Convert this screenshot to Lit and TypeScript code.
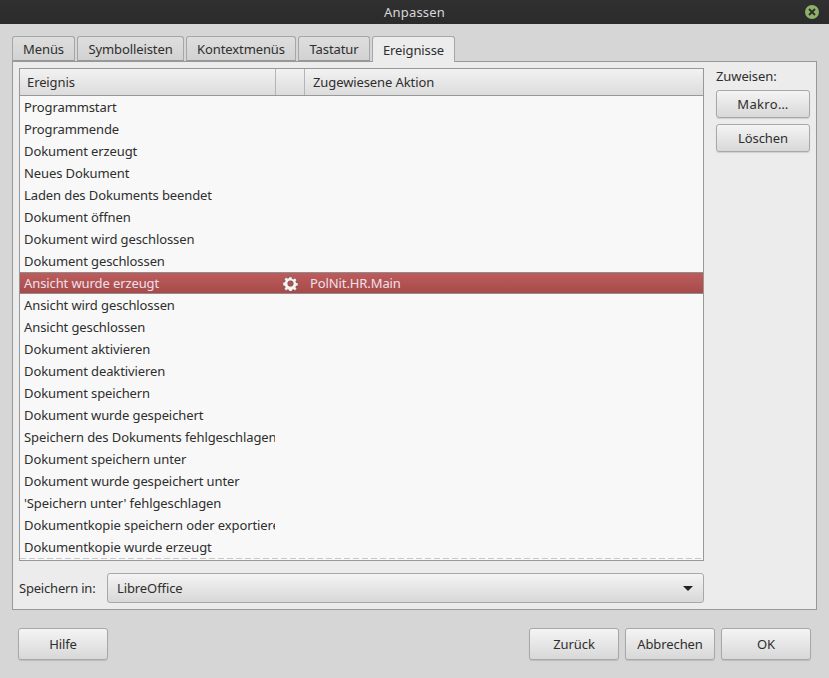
import { LitElement, html, css } from "lit";
import { customElement } from "lit/decorators.js";

const ROWS = [
  "Programmstart","Programmende","Dokument erzeugt","Neues Dokument","Laden des Dokuments beendet",
  "Dokument öffnen","Dokument wird geschlossen","Dokument geschlossen","Ansicht wurde erzeugt",
  "Ansicht wird geschlossen","Ansicht geschlossen","Dokument aktivieren","Dokument deaktivieren",
  "Dokument speichern","Dokument wurde gespeichert","Speichern des Dokuments fehlgeschlagen",
  "Dokument speichern unter","Dokument wurde gespeichert unter","'Speichern unter' fehlgeschlagen",
  "Dokumentkopie speichern oder exportieren","Dokumentkopie wurde erzeugt",
];
const TABS = [["Menüs",63],["Symbolleisten",107],["Kontextmenüs",110],["Tastatur",72],["Ereignisse",83]] as const;

@customElement("app-root")
export class AppRoot extends LitElement {
  static styles = css`
    :host { display: block; width: 829px; height: 678px; background: #d6d6d6; overflow: hidden;
      font: 13px "Noto Sans", "Open Sans", sans-serif; color: #2e2e2e; letter-spacing: -0.1px; }
    .title { height: 24px; background: linear-gradient(#303030, #2b2b2b); color: #d8d8d8; display: flex;
      align-items: center; justify-content: center; position: relative; letter-spacing: 0.2px; }
    .close { position: absolute; left: 805px; top: 5px; width: 14px; height: 14px; border-radius: 50%; background: #8cb369;
      display: flex; align-items: center; justify-content: center; }
    .content { padding: 12px 12px 0 12px; }
    .tabs { display: flex; gap: 2px; height: 25px; position: relative; z-index: 1; }
    .tab { box-sizing: border-box; height: 25px; border: 1px solid #a6a6a6; border-bottom: 1px solid #989898; border-radius: 3px 3px 0 0;
      background: linear-gradient(#dedede, #d2d2d2); display: flex; align-items: center; justify-content: center; }
    .tab.active { height: 26px; background: #ececec; border-bottom: none; }
    .panel { box-sizing: border-box; width: 805px; height: 549px; border: 1px solid #989898; background: #ececec;
      padding: 6px 6px 5px 6px; display: grid; grid-template-columns: 685px 1fr; grid-template-rows: 493px 1fr; column-gap: 12px; row-gap: 12px; }
    .list { box-sizing: border-box; border: 1px solid #989898; background: #f8f8f8; overflow: hidden; position: relative; }
    .head { display: grid; grid-template-columns: 256px 29px 1fr; height: 27px; box-sizing: border-box; border-bottom: 1px solid #989898; }
    .hc { box-sizing: border-box; background: linear-gradient(#f2f2f2, #dcdcdc); border-right: 1px solid #b4b4b4;
      display: flex; align-items: center; padding-left: 7px; padding-bottom: 1px; }
    .hc:last-child { border-right: none; padding-left: 8px; }
    .row { height: 22px; display: grid; grid-template-columns: 255px 30px 1fr; align-items: center; box-sizing: border-box; white-space: nowrap; }
    .row .name { padding-left: 4px; overflow: hidden; }
    .row.sel { background: linear-gradient(#bc5c5c, #a94a4a); color: #eee0ea; border-top: 1px solid #8e8e8e; border-bottom: 1px solid #8e8e8e; }
    .row .icon { display: flex; justify-content: center; }
    .row .act { padding-left: 5px; }
    .dash { position: absolute; left: 0; right: 0; bottom: 1px; height: 1px;
      background: repeating-linear-gradient(90deg, #c8c8c8 0 6px, transparent 6px 9px); }
    .side { display: flex; flex-direction: column; gap: 6px; }
    .side .lbl { height: 16px; line-height: 16px; }
    .btn { box-sizing: border-box; border: 1px solid #a8a8a8; border-radius: 3px; background: linear-gradient(#f4f4f4, #d8d8d8);
      box-shadow: 0 1px 1px rgba(0,0,0,.12); display: flex; align-items: center; justify-content: center; }
    .side .btn { width: 94px; height: 28px; }
    .side .btn.wide { letter-spacing: 0.35px; }
    .save { grid-column: 1; display: flex; align-items: center; height: 30px; }
    .save .lbl { width: 88px; flex: none; letter-spacing: -0.2px; }
    .combo { box-sizing: border-box; flex: 1; height: 30px; border: 1px solid #a8a8a8; border-radius: 3px;
      background: linear-gradient(#f4f4f4, #d8d8d8); display: flex; align-items: center; padding: 0 10px 0 9px; justify-content: space-between; }
    .arrow { width: 0; height: 0; border-left: 5px solid transparent; border-right: 5px solid transparent; border-top: 5px solid #222; }
    .foot { display: flex; padding: 18px 18px 0 18px; gap: 6px; }
    .foot .btn { width: 90px; height: 32px; }
    .spacer { flex: 1; }
  `;

  gear() {
    return html`<svg width="15" height="15" viewBox="0 0 16 16"><path fill="#f4f4f4" stroke="#5c3a3a" stroke-width=".5" fill-rule="evenodd" d="M6.6 0.8h2.8l.4 2 1.2.5 1.7-1.1 2 2-1.1 1.7.5 1.2 2 .4v2.8l-2 .4-.5 1.2 1.1 1.7-2 2-1.7-1.1-1.2.5-.4 2H6.6l-.4-2-1.2-.5-1.7 1.1-2-2 1.1-1.7-.5-1.2-2-.4V6.7l2-.4.5-1.2L1.3 3.4l2-2L5 2.5l1.2-.5zM8 5a3 3 0 1 0 0 6 3 3 0 0 0 0-6z"/></svg>`;
  }

  render() {
    return html`
      <div class="title">Anpassen
        <div class="close"><svg width="8" height="8" viewBox="0 0 8 8"><path d="M1 1l6 6M7 1L1 7" stroke="#2b2b2b" stroke-width="1.8"/></svg></div>
      </div>
      <div class="content">
        <div class="tabs">
          ${TABS.map(([t, w], i) => html`<div class="tab ${i === 4 ? "active" : ""}" style="width:${w}px">${t}</div>`)}
        </div>
        <div class="panel">
          <div class="list">
            <div class="head"><div class="hc">Ereignis</div><div class="hc"></div><div class="hc">Zugewiesene Aktion</div></div>
            ${ROWS.map((r, i) => html`<div class="row ${i === 8 ? "sel" : ""}">
              <div class="name">${r}</div>
              <div class="icon">${i === 8 ? this.gear() : ""}</div>
              <div class="act">${i === 8 ? "PolNit.HR.Main" : ""}</div>
            </div>`)}
            <div class="dash"></div>
          </div>
          <div class="side">
            <div class="lbl">Zuweisen:</div>
            <div class="btn wide">Makro…</div>
            <div class="btn">Löschen</div>
          </div>
          <div class="save">
            <div class="lbl">Speichern in:</div>
            <div class="combo"><span>LibreOffice</span><span class="arrow"></span></div>
          </div>
        </div>
      </div>
      <div class="foot">
        <div class="btn">Hilfe</div>
        <div class="spacer"></div>
        <div class="btn">Zurück</div>
        <div class="btn">Abbrechen</div>
        <div class="btn">OK</div>
      </div>
    `;
  }
}
